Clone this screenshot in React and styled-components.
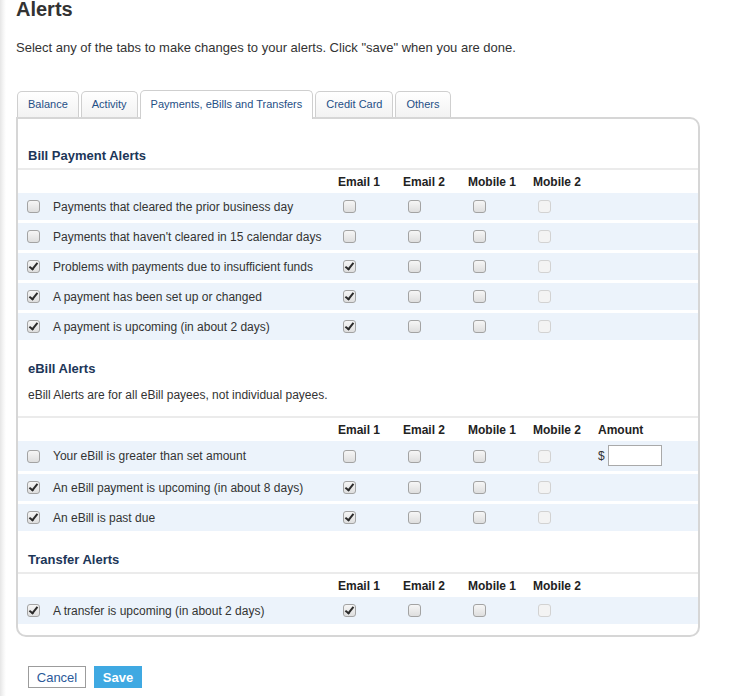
import React from 'react';
import styled, { createGlobalStyle } from 'styled-components';

const GlobalStyle = createGlobalStyle`
  body {
    margin: 0;
    font-family: "Liberation Sans", Arial, sans-serif;
    color: #333;
    background: linear-gradient(90deg, #e6e6e6 0px, #f4f4f4 3px, #fff 6px);
  }
`;

const Page = styled.div`
  padding: 0 0 8px 16px;
  width: 684px;
`;

const Title = styled.h1`
  margin: -3px 0 0;
  font-size: 20px;
  line-height: 24px;
  font-weight: 700;
  color: #333;
`;

const Intro = styled.p`
  margin: 19px 0 0;
  font-size: 13px;
  line-height: 16px;
  color: #333;
`;

const TabBar = styled.div`
  display: flex;
  align-items: flex-end;
  gap: 2px;
  margin: 34px 0 -2px 1px;
  height: 29px;
`;

const Tab = styled.div`
  box-sizing: border-box;
  height: ${p => (p.$active ? 29 : 28)}px;
  padding: 0 10px;
  border: 1px solid #cfcfcf;
  border-bottom: none;
  border-radius: 5px 5px 0 0;
  background: ${p =>
    p.$active ? '#fff' : 'linear-gradient(#ffffff, #f1f1f1)'};
  color: #1f4f86;
  font-size: 11px;
  line-height: ${p => (p.$active ? 26 : 25)}px;
  white-space: nowrap;
  position: relative;
  z-index: ${p => (p.$active ? 2 : 0)};
`;

const Panel = styled.div`
  position: relative;
  z-index: 1;
  background: #fff;
  border: 2px solid #d6d6d6;
  border-radius: 0 10px 10px 10px;
  padding: 8px 0 8px;
`;

const Section = styled.section`
  padding-top: ${p => (p.$first ? 21 : 18)}px;
`;

const SectionTitle = styled.h2`
  margin: 0 0 4px;
  padding: 0 10px;
  font-size: 13px;
  line-height: 16px;
  font-weight: 700;
  color: #1c3658;
`;

const SectionNote = styled.p`
  margin: 10px 0 13px;
  padding: 0 10px;
  font-size: 12px;
  line-height: 16px;
  color: #333;
`;

const Grid = styled.div`
  display: grid;
  grid-template-columns: 26px 285px 65px 65px 65px 65px 1fr;
  align-items: center;
  padding-left: 9px;
  font-size: 12px;
`;

const HeaderRow = styled(Grid)`
  border-top: 2px solid #ebebeb;
  height: 23px;
  font-weight: 700;
  color: #222;
`;

const AlertRow = styled(Grid)`
  min-height: 27px;
  margin-bottom: 3px;
  background: #ecf3fb;
  color: #333;
`;

const Cell = styled.div`
  grid-column: ${p => p.$col || 'auto'};
  display: flex;
  align-items: center;
  padding-left: ${p => (p.$box ? 5 : 0)}px;
`;

const Check = styled.input.attrs({ type: 'checkbox' })`
  appearance: none;
  position: relative;
  box-sizing: border-box;
  width: 13px;
  height: 13px;
  margin: 0;
  border: 1px solid ${p => (p.disabled ? '#d2d2d2' : '#a3a3a3')};
  border-radius: 3px;
  background: ${p =>
    p.disabled ? '#f3f3f3' : 'linear-gradient(#f6f6f6, #dedede)'};

  &:checked::after {
    content: '';
    position: absolute;
    left: 3px;
    top: 0px;
    width: 3px;
    height: 7px;
    border: solid #2b2b2b;
    border-width: 0 2px 2px 0;
    transform: rotate(38deg);
  }
`;

const Dollar = styled.span`
  margin-right: 3px;
`;

const AmountInput = styled.input`
  box-sizing: border-box;
  width: 54px;
  height: 21px;
  margin: 4px 0 5px;
  border: 1px solid #a9a9a9;
  background: #fff;
`;

const Actions = styled.div`
  display: flex;
  gap: 8px;
  margin: 29px 0 0 12px;
`;

const Button = styled.button`
  box-sizing: border-box;
  height: 22px;
  padding: 0;
  width: ${p => (p.$primary ? 48 : 58)}px;
  border: 1px solid ${p => (p.$primary ? '#3fa9e2' : '#9c9c9c')};
  background: ${p => (p.$primary ? '#3fa9e2' : '#fff')};
  color: ${p => (p.$primary ? '#fff' : '#2b5a9a')};
  font-family: "Liberation Sans", Arial, sans-serif;
  font-size: 13px;
  font-weight: ${p => (p.$primary ? 700 : 400)};
`;

const tabs = [
  'Balance',
  'Activity',
  'Payments, eBills and Transfers',
  'Credit Card',
  'Others',
];

const sections = [
  {
    title: 'Bill Payment Alerts',
    alerts: [
      { label: 'Payments that cleared the prior business day', on: false },
      { label: "Payments that haven't cleared in 15 calendar days", on: false },
      { label: 'Problems with payments due to insufficient funds', on: true },
      { label: 'A payment has been set up or changed', on: true },
      { label: 'A payment is upcoming (in about 2 days)', on: true },
    ],
  },
  {
    title: 'eBill Alerts',
    note: 'eBill Alerts are for all eBill payees, not individual payees.',
    amount: true,
    alerts: [
      { label: 'Your eBill is greater than set amount', on: false, amount: true },
      { label: 'An eBill payment is upcoming (in about 8 days)', on: true },
      { label: 'An eBill is past due', on: true },
    ],
  },
  {
    title: 'Transfer Alerts',
    alerts: [{ label: 'A transfer is upcoming (in about 2 days)', on: true }],
  },
];

const channels = ['Email 1', 'Email 2', 'Mobile 1', 'Mobile 2'];

const App = () => (
  <>
    <GlobalStyle />
    <Page>
      <Title>Alerts</Title>
      <Intro>
        Select any of the tabs to make changes to your alerts. Click "save"
        when you are done.
      </Intro>
      <TabBar>
        {tabs.map(t => (
          <Tab key={t} $active={t.startsWith('Payments')}>
            {t}
          </Tab>
        ))}
      </TabBar>
      <Panel>
        {sections.map((s, i) => (
          <Section key={s.title} $first={i === 0}>
            <SectionTitle>{s.title}</SectionTitle>
            {s.note && <SectionNote>{s.note}</SectionNote>}
            <HeaderRow>
              {channels.map((c, ci) => (
                <Cell key={c} $col={ci + 3}>
                  {c}
                </Cell>
              ))}
              {s.amount && <Cell $col={7}>Amount</Cell>}
            </HeaderRow>
            {s.alerts.map(a => (
              <AlertRow key={a.label}>
                <Cell>
                  <Check defaultChecked={a.on} />
                </Cell>
                <Cell>{a.label}</Cell>
                {channels.map((c, ci) => (
                  <Cell key={c} $box>
                    <Check
                      defaultChecked={ci === 0 && a.on}
                      disabled={ci === 3}
                    />
                  </Cell>
                ))}
                {a.amount && (
                  <Cell>
                    <Dollar>$</Dollar>
                    <AmountInput type="text" />
                  </Cell>
                )}
              </AlertRow>
            ))}
          </Section>
        ))}
      </Panel>
      <Actions>
        <Button>Cancel</Button>
        <Button $primary>Save</Button>
      </Actions>
    </Page>
  </>
);

export default App;
